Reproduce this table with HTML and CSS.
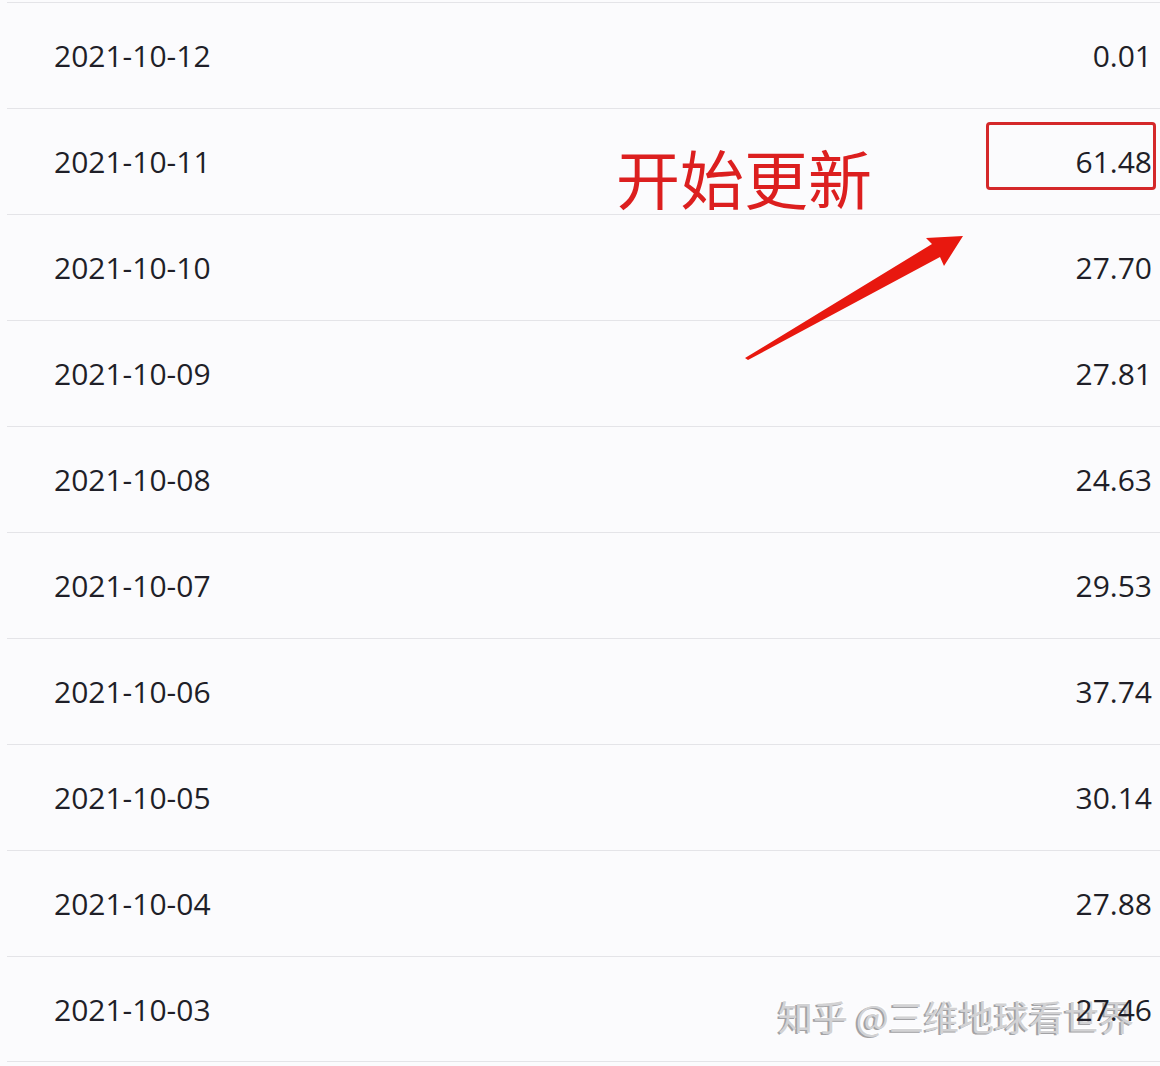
FILE: index.html
```html
<!DOCTYPE html>
<html lang="zh-CN">
<head>
    <meta charset="UTF-8">
    <meta name="viewport" content="width=device-width, initial-scale=1.0">
    <title>每日收益</title>
    <link rel="stylesheet" href="styles.css">
</head>
<body>

    <div class="page">
        <div class="watermark">知乎 @三维地球看世界</div>

        <ul class="income-list">
            <li class="income-row"><span class="date">2021-10-12</span><span class="amount">0.01</span></li>
            <li class="income-row"><span class="date">2021-10-11</span><span class="amount">61.48</span></li>
            <li class="income-row"><span class="date">2021-10-10</span><span class="amount">27.70</span></li>
            <li class="income-row"><span class="date">2021-10-09</span><span class="amount">27.81</span></li>
            <li class="income-row"><span class="date">2021-10-08</span><span class="amount">24.63</span></li>
            <li class="income-row"><span class="date">2021-10-07</span><span class="amount">29.53</span></li>
            <li class="income-row"><span class="date">2021-10-06</span><span class="amount">37.74</span></li>
            <li class="income-row"><span class="date">2021-10-05</span><span class="amount">30.14</span></li>
            <li class="income-row"><span class="date">2021-10-04</span><span class="amount">27.88</span></li>
            <li class="income-row"><span class="date">2021-10-03</span><span class="amount">27.46</span></li>
        </ul>

        <!-- annotation drawn over the list -->
        <div class="note-text">开始更新</div>
        <div class="note-box"></div>
        <svg class="note-arrow" width="1160" height="1066" viewBox="0 0 1160 1066">
            <polygon points="745,358 932,244 926,238 963,236 944,266 940,257 748,360" fill="#e8180f"/>
        </svg>
    </div>

</body>
</html>
```

FILE: styles.css
```css
   body {
       margin: 0;
       background-color: #fbfbfd;
       font-family: "Open Sans", "Noto Sans", sans-serif;
   }

   .page {
       position: relative;
       width: 1160px;
       height: 1066px;
       overflow: hidden;
   }

   .income-list {
       position: relative;
       list-style: none;
       margin: 0 0 0 7px;
       padding: 2px 0 0 0;
   }

   .income-row {
       display: flex;
       justify-content: space-between;
       align-items: center;
       box-sizing: border-box;
       height: 106px;
       padding: 0 8px 0 47px;
       border-top: 1px solid #e4e4e8;
       font-size: 30px;
       color: #1f1f28;
   }

   .income-row:last-child {
       border-bottom: 1px solid #e4e4e8;
   }

   .note-text {
       position: absolute;
       left: 616px;
       top: 136px;
       font-family: "Noto Sans CJK SC", sans-serif;
       font-size: 64px;
       line-height: 80px;
       color: #dc1f1f;
   }

   .note-box {
       position: absolute;
       left: 986px;
       top: 122px;
       width: 164px;
       height: 62px;
       border: 3px solid #d4282a;
       border-radius: 4px;
   }

   .note-arrow {
       position: absolute;
       left: 0;
       top: 0;
   }

   .watermark {
       position: absolute;
       left: 778px;
       top: 991px;
       font-family: "Noto Sans CJK SC", sans-serif;
       font-size: 35px;
       line-height: 50px;
       color: #d2d2d4;
       text-shadow: -2px 1px 0 #a2a2a5, 1px -1px 0 #ffffff;
   }
```
